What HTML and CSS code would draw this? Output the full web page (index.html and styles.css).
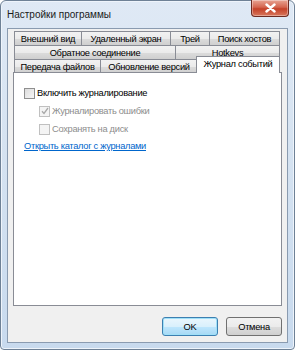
FILE: index.html
```html
<!DOCTYPE html>
<html>
<head>
<meta charset="utf-8">
<link rel="stylesheet" href="styles.css">
</head>
<body>
<div class="window">
  <div class="titlebar">
    <span class="title">Настройки программы</span>
    <div class="close"><svg width="11" height="10" viewBox="0 0 11 10"><path d="M1.5 1.5 L9.5 8.5 M9.5 1.5 L1.5 8.5" stroke="#fff" stroke-width="2.4" stroke-linecap="round"/></svg></div>
  </div>
  <div class="client">
    <div class="tabs">
      <div class="row">
        <div class="tab w1">Внешний вид</div>
        <div class="tab w2">Удаленный экран</div>
        <div class="tab w3">Трей</div>
        <div class="tab w4">Поиск хостов</div>
      </div>
      <div class="row">
        <div class="tab w5">Обратное соединение</div>
        <div class="tab w6">Hotkeys</div>
      </div>
      <div class="row last">
        <div class="tab w7">Передача файлов</div>
        <div class="tab w8">Обновление версий</div>
        <div class="tab sel">Журнал событий</div>
      </div>
    </div>
    <div class="panel">
      <label class="check"><span class="box"></span>Включить журналирование</label>
      <label class="check sub disabled"><span class="box checked"><svg width="8" height="8" viewBox="0 0 8 8"><path d="M1 4.2 L3 6.4 L7 1" fill="none" stroke="#a8a8a8" stroke-width="1.3"/></svg></span>Журналировать ошибки</label>
      <label class="check sub disabled"><span class="box"></span>Сохранять на диск</label>
      <a class="link" href="#">Открыть каталог с журналами</a>
    </div>
    <div class="buttons">
      <div class="btn default">OK</div>
      <div class="btn">Отмена</div>
    </div>
  </div>
</div>
</body>
</html>
```
FILE: styles.css
```css
html, body {
  margin: 0;
  padding: 0;
  background: #fff;
}
body {
  font-family: "Liberation Sans", Arial, sans-serif;
  font-size: 9.3px;
  letter-spacing: -0.3px;
  color: #000;
}
.window {
  width: 295px;
  height: 350px;
  box-sizing: border-box;
  border: 1px solid #6e8196;
  border-radius: 6px 6px 4px 4px;
  background: linear-gradient(180deg, #dfe9f5 0%, #d6e3f1 40%, #c8daee 100%);
  box-shadow: inset 0 0 0 1px #eef4fb;
  display: flex;
  flex-direction: column;
}
.titlebar {
  height: 27px;
  display: flex;
  align-items: flex-start;
  padding-left: 6px;
  padding-right: 5px;
}
.title {
  font-size: 10px;
  letter-spacing: 0;
  margin-top: 8px;
  color: #1a1a1a;
}
.close {
  margin-left: auto;
  width: 36px;
  height: 16px;
  margin-top: -1px;
  border: 1px solid #6d2b22;
  border-top: none;
  border-radius: 0 0 4px 4px;
  background: linear-gradient(180deg, #e8a493 0%, #d4654f 45%, #c44128 55%, #d8775c 100%);
  display: flex;
  align-items: center;
  justify-content: center;
  box-shadow: inset 0 0 0 1px rgba(255,255,255,0.35);
}
.client {
  flex: 1;
  margin: 0 6px 6px 6px;
  background: #f0f0f0;
  border: 1px solid #8a9bb0;
  padding: 2px 5px 0 5px;
  display: flex;
  flex-direction: column;
}
.tabs {
  display: flex;
  flex-direction: column;
  padding-left: 1px;
  padding-right: 2px;
}
.row {
  display: flex;
  height: 14px;
}
.tab {
  box-sizing: border-box;
  height: 14px;
  border: 1px solid #898c95;
  border-bottom: none;
  margin-right: -1px;
  background: linear-gradient(180deg, #f2f2f2 0%, #ebebeb 50%, #dcdcdc 51%, #cfcfcf 100%);
  display: flex;
  align-items: center;
  justify-content: center;
  white-space: nowrap;
}
.row .tab:last-child { flex: 1; margin-right: 0; }
.w1 { width: 68px; }
.w2 { width: 90px; }
.w3 { width: 40px; }
.w5 { width: 162px; }
.w7 { width: 87px; }
.w8 { width: 98px; }
.row.last { align-items: flex-end; }
.tab.sel {
  height: 17px;
  margin-top: -3px;
  margin-right: -2px;
  margin-left: -1px;
  background: #fff;
  position: relative;
  z-index: 2;
  padding-bottom: 2px;
}
.panel {
  height: 234px;
  box-sizing: border-box;
  background: #fff;
  border: 1px solid #898c95;
  margin-top: -1px;
  padding: 11px 0 0 10px;
  display: flex;
  flex-direction: column;
  align-items: flex-start;
}
.check {
  display: flex;
  align-items: center;
  height: 18px;
}
.check.sub { margin-left: 15px; }
.check.disabled { color: #8d8d8d; }
.box {
  width: 9px;
  height: 9px;
  border: 1px solid #8f8f8f;
  background: linear-gradient(135deg, #dcdcdc, #f6f6f6);
  margin-right: 2px;
  display: flex;
  align-items: center;
  justify-content: center;
}
.disabled .box {
  border-color: #c0c0c0;
  background: #f4f4f4;
}
.link {
  margin-top: 3px;
  color: #0066cc;
  text-decoration: underline;
}
.buttons {
  display: flex;
  justify-content: flex-end;
  gap: 8px;
  margin-top: 11px;
}
.btn {
  width: 56px;
  height: 19px;
  box-sizing: border-box;
  border: 1px solid #707070;
  border-radius: 3px;
  background: linear-gradient(180deg, #f2f2f2 0%, #ebebeb 50%, #dddddd 51%, #cfcfcf 100%);
  display: flex;
  align-items: center;
  justify-content: center;
}
.btn.default {
  border-color: #3c7fb1;
  background: linear-gradient(180deg, #eaf6fd 0%, #d9f0fc 50%, #bee6fd 51%, #a7d9f5 100%);
  box-shadow: inset 0 0 0 1px #9fe0f8;
}
```
